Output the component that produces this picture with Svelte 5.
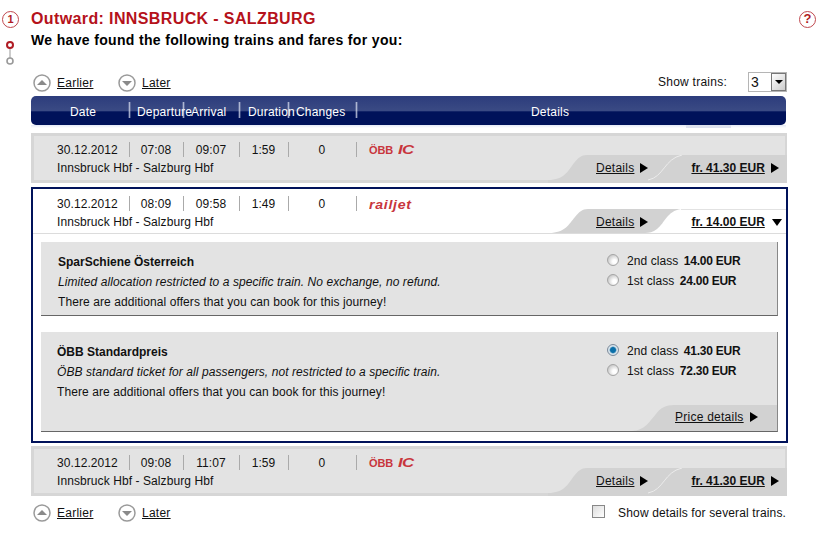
<script>
  const trains = [
    { dep: "07:08", arr: "09:07", dur: "1:59", price: "fr. 41.30 EUR", logo: "ic" },
    { dep: "08:09", arr: "09:58", dur: "1:49", price: "fr. 14.00 EUR", logo: "railjet", open: true },
    { dep: "09:08", arr: "11:07", dur: "1:59", price: "fr. 41.30 EUR", logo: "ic" }
  ];

  const fares = [
    {
      title: "SparSchiene Österreich",
      text: "Limited allocation restricted to a specific train. No exchange, no refund.",
      second: "14.00 EUR",
      first: "24.00 EUR"
    },
    {
      title: "ÖBB Standardpreis",
      text: "ÖBB standard ticket for all passengers, not restricted to a specific train.",
      second: "41.30 EUR",
      first: "72.30 EUR",
      selected: true,
      priceDetails: true
    }
  ];
</script>

{#snippet earlierLater()}
  <div class="paging">
    <svg class="round" viewBox="0 0 18 18"><circle cx="9" cy="9" r="8" /><path d="M4 11 L9 6 L14 11 Z" /></svg>
    <a href="#earlier">Earlier</a>
    <svg class="round later" viewBox="0 0 18 18"><circle cx="9" cy="9" r="8" /><path d="M4 7 L14 7 L9 12 Z" /></svg>
    <a href="#later">Later</a>
  </div>
{/snippet}

{#snippet rowCells(t)}
  <div class="cols">
    <div class="c-date">30.12.2012</div>
    <div class="c-time sep">{t.dep}</div>
    <div class="c-arr sep">{t.arr}</div>
    <div class="c-dur sep">{t.dur}</div>
    <div class="c-chg sep">0</div>
    <div class="c-logo sep">
      {#if t.logo === "ic"}
        <span class="logo obb">ÖBB</span><span class="logo ic">IC</span>
      {:else}
        <span class="logo rj">railjet</span>
      {/if}
    </div>
  </div>
  <div class="route">Innsbruck Hbf - Salzburg Hbf</div>
{/snippet}

<div class="page">
  <div class="rail">
    <div class="step">1</div>
    <svg class="progress" width="12" height="26" viewBox="0 0 12 26">
      <line x1="6" y1="8" x2="6" y2="19" stroke="#999" stroke-width="1" />
      <circle cx="6" cy="5" r="3" fill="#fff" stroke="#b01c24" stroke-width="2" />
      <circle cx="6" cy="21" r="3" fill="#fff" stroke="#999" stroke-width="1.6" />
    </svg>
  </div>

  <div class="main">
    <h1>Outward: INNSBRUCK - SALZBURG</h1>
    <h2>We have found the following trains and fares for you:</h2>

    <div class="toolbar">
      {@render earlierLater()}
      <div class="show">
        <span>Show trains:</span>
        <div class="select"><span>3</span><i class="drop"></i></div>
      </div>
    </div>

    <div class="thead">
      <div class="th-date">Date</div>
      <div class="th">Departure</div>
      <div class="th">Arrival</div>
      <div class="th th-dur">Duration</div>
      <div class="th">Changes</div>
      <div class="th th-details">Details</div>
    </div>
    <div class="under"><i></i></div>

    {#each trains as t}
      {#if t.open}
        <div class="box">
          <div class="row-open">
            {@render rowCells(t)}
            <div class="tab tab-open">
              <svg viewBox="0 0 237 25" width="237" height="25">
                <path d="M0 24 C16 24 20 15 26 8 C30 3 33 0 39 0 L132 0 C118 2 116 14 108 20 C104 23 100 24 96 24 Z" fill="#d2d2d2" />
                <line x1="132" y1="0.5" x2="237" y2="0.5" stroke="#e2e2e2" />
              </svg>
              <div class="links">
                <a href="#details">Details</a><i class="arrow"></i>
                <a class="price" href="#price">{t.price}</a><i class="arrow-down"></i>
              </div>
            </div>
          </div>

          {#each fares as f}
            <div class="fare" class:tall={f.priceDetails}>
              <div class="fare-text">
                <div class="fare-title">{f.title}</div>
                <div class="fare-desc">{f.text}</div>
                <div>There are additional offers that you can book for this journey!</div>
              </div>
              <div class="options">
                <div class="option"><i class="radio" class:on={f.selected}></i>2nd class <b>{f.second}</b></div>
                <div class="option"><i class="radio"></i>1st class <b>{f.first}</b></div>
              </div>
              {#if f.priceDetails}
                <div class="price-tab">
                  <svg viewBox="0 0 145 26" width="145" height="26">
                    <path d="M0 26 C12 26 18 16 24 9 C28 3 34 0 42 0 L145 0 L145 26 Z" fill="#d2d2d2" />
                  </svg>
                  <div class="links-price"><a href="#pd">Price details</a><i class="arrow"></i></div>
                </div>
              {/if}
            </div>
          {/each}
        </div>
      {:else}
        <div class="row">
          {@render rowCells(t)}
          <div class="tab">
            <svg viewBox="0 0 239 28" width="239" height="28">
              <path d="M0 25 C16 25 20 16 26 8 C30 3 33 0 39 0 L239 0 L239 28 L0 28 Z" fill="#d2d2d2" />
              <path d="M100 25 C116 22 116 4 134 0" fill="none" stroke="#ececec" />
            </svg>
            <div class="links">
              <a href="#details">Details</a><i class="arrow"></i>
              <a class="price" href="#price">{t.price}</a><i class="arrow"></i>
            </div>
          </div>
        </div>
      {/if}
    {/each}

    <div class="foot">
      {@render earlierLater()}
      <div class="several"><i class="check"></i>Show details for several trains.</div>
    </div>
  </div>

  <div class="help">?</div>
</div>

<style>
  :global(body) {
    background: #fff;
    color: #111;
    font-family: "Liberation Sans", Arial, sans-serif;
    font-size: 12px;
    letter-spacing: 0.08px;
  }
  a {
    color: #111;
    text-decoration: underline;
    letter-spacing: 0.25px;
  }
  i {
    display: block;
  }
  .page {
    display: flex;
    width: 818px;
    height: 536px;
    overflow: hidden;
  }
  .rail {
    width: 31px;
    flex: none;
    padding: 11px 0 0 2px;
    box-sizing: border-box;
  }
  .step,
  .help {
    width: 17px;
    height: 17px;
    box-sizing: border-box;
    border: 1.5px solid #c0484e;
    border-radius: 50%;
    color: #b01c24;
    font-size: 11px;
    font-weight: bold;
    line-height: 14px;
    text-align: center;
  }
  .help {
    margin: 11px 0 0 11px;
    flex: none;
    font-size: 13px;
  }
  .progress {
    display: block;
    margin: 12px 0 0 2px;
  }
  .main {
    width: 757px;
    flex: none;
  }
  h1 {
    margin: 9px 0 0;
    color: #b5121b;
    font-size: 16px;
    line-height: 20px;
    letter-spacing: 0.38px;
  }
  h2 {
    margin: 2px 0 0;
    color: #000;
    font-size: 14px;
    line-height: 18px;
    letter-spacing: 0.34px;
  }
  .toolbar {
    display: flex;
    justify-content: space-between;
    align-items: center;
    height: 20px;
    margin-top: 23px;
    padding-right: 1px;
  }
  .paging {
    display: flex;
    align-items: center;
    padding: 2px 0 0 2px;
  }
  .paging a {
    margin-left: 6px;
    width: 36px;
  }
  .round {
    width: 18px;
    height: 18px;
    flex: none;
  }
  .round.later {
    margin-left: 25px;
  }
  .round circle {
    fill: #fff;
    stroke: #9a9a9a;
    stroke-width: 1.5;
  }
  .round path {
    fill: #8a8a8a;
  }
  .show {
    display: flex;
    align-items: center;
    gap: 21px;
    letter-spacing: 0.25px;
  }
  .select {
    display: flex;
    align-items: center;
    justify-content: space-between;
    width: 39px;
    height: 20px;
    box-sizing: border-box;
    border: 1px solid #b5b5b5;
    padding: 0 0 0 2px;
    font-size: 14px;
  }
  .drop {
    width: 15px;
    height: 18px;
    box-sizing: border-box;
    border: 1px solid #777;
    background: linear-gradient(135deg, #fff, #ccc);
    position: relative;
  }
  .drop::after {
    content: "";
    position: absolute;
    left: 3px;
    top: 6px;
    border: 4px solid transparent;
    border-top: 4px solid #000;
    border-bottom: 0;
  }
  .thead {
    display: grid;
    grid-template-columns: 98px 54px 56px 49px 68px 1fr;
    width: 755px;
    height: 29px;
    margin-top: 4px;
    border-radius: 5px;
    background: linear-gradient(#2c3c7c 0, #3a4a84 50%, #00125a 55%, #00125a 100%);
    color: #fff;
    line-height: 32px;
    white-space: nowrap;
    letter-spacing: 0.2px;
  }
  .th-date {
    text-align: center;
    padding-left: 6px;
  }
  .th {
    padding-left: 8px;
    position: relative;
  }
  .th::before {
    content: "";
    position: absolute;
    left: -1px;
    top: 6px;
    width: 3px;
    height: 16px;
    background: linear-gradient(90deg, transparent, rgba(225, 230, 245, 0.7), transparent);
  }
  .th-dur {
    padding-left: 9px;
  }
  .th-details {
    padding-left: 175px;
  }
  .under {
    display: flex;
    justify-content: flex-end;
    width: 755px;
    height: 3px;
    background: linear-gradient(#e3e8f6, #fff);
    margin-bottom: 5px;
  }
  .under i {
    width: 45px;
    margin-right: 55px;
    background: #dde1ee;
  }
  .row {
    position: relative;
    width: 756px;
    height: 50px;
    box-sizing: border-box;
    padding-top: 5px;
    border: 3px solid #d6d6d6;
    border-right-width: 2px;
    background: #e3e3e3;
  }
  .box + .row {
    margin-top: 3px;
  }
  .cols {
    display: grid;
    grid-template-columns: 95px 54px 56px 49px 68px 1fr;
    height: 18px;
    line-height: 18px;
  }
  .c-date {
    padding-left: 23px;
  }
  .c-time,
  .c-arr,
  .c-dur,
  .c-chg {
    text-align: center;
  }
  .sep {
    position: relative;
  }
  .sep::before {
    content: "";
    position: absolute;
    left: 0;
    top: 1px;
    width: 1px;
    height: 15px;
    background: #aaa;
  }
  .route {
    padding-left: 23px;
    line-height: 18px;
  }
  .c-logo {
    padding-left: 13px;
    display: flex;
    align-items: center;
  }
  .logo {
    color: #c8353c;
    font-weight: bold;
    font-size: 11px;
  }
  .obb {
    letter-spacing: -0.1px;
  }
  .ic {
    font-style: italic;
    font-size: 12px;
    margin-left: 5px;
    letter-spacing: -0.5px;
    transform: scaleX(1.4);
    transform-origin: left;
  }
  .rj {
    font-style: italic;
    font-size: 12px;
    letter-spacing: 0.6px;
    transform: scaleX(1.18);
    transform-origin: left;
    padding-top: 1px;
  }
  .tab {
    position: absolute;
    right: -2px;
    bottom: -3px;
    width: 239px;
    height: 28px;
  }
  .tab svg,
  .price-tab svg {
    position: absolute;
    left: 0;
    top: 0;
  }
  .links {
    position: relative;
    display: flex;
    align-items: center;
    height: 18px;
    padding: 4px 0 0 48px;
  }
  .price {
    font-weight: bold;
    margin-left: 43px;
    letter-spacing: 0;
  }
  .arrow {
    margin-left: 6px;
    border-left: 8px solid #000;
    border-top: 5px solid transparent;
    border-bottom: 5px solid transparent;
  }
  .arrow-down {
    margin-left: 7px;
    border-top: 7px solid #000;
    border-left: 5px solid transparent;
    border-right: 5px solid transparent;
  }
  .box {
    width: 757px;
    height: 256px;
    margin-top: 4px;
    box-sizing: border-box;
    border: 2px solid #00125a;
    background: #fff;
  }
  .row-open {
    position: relative;
    height: 45px;
    box-sizing: border-box;
    padding-top: 6px;
    border-bottom: 1px solid #dcdcdc;
  }
  .row-open .cols,
  .row-open .route {
    margin-left: 1px;
  }
  .tab-open {
    right: 0;
    bottom: -1px;
    width: 237px;
    height: 25px;
  }
  .tab-open .links {
    padding: 4px 0 0 47px;
  }
  .fare {
    position: relative;
    display: flex;
    width: 737px;
    height: 74px;
    box-sizing: border-box;
    margin: 8px 0 0 8px;
    padding: 10px 0 0 17px;
    background: #e3e3e3;
    border-right: 1px solid #888;
    border-bottom: 1px solid #666;
    line-height: 20px;
  }
  .fare + .fare {
    margin-top: 16px;
    padding-left: 16px;
  }
  .fare.tall {
    height: 100px;
  }
  .fare-text {
    width: 549px;
    flex: none;
  }
  .tall .fare-text {
    width: 550px;
  }
  .fare-title {
    font-weight: bold;
    letter-spacing: 0;
  }
  .fare-desc {
    font-style: italic;
  }
  .options {
    line-height: 20px;
    margin-top: -1px;
  }
  .option {
    display: flex;
    align-items: center;
    gap: 2px;
    white-space: pre;
  }
  .option b {
    letter-spacing: -0.25px;
  }
  .radio {
    width: 12px;
    height: 12px;
    box-sizing: border-box;
    margin: -3px 6px 0 0;
    border: 1px solid #a5a5a5;
    border-radius: 50%;
    background: radial-gradient(circle at 65% 65%, #fff 20%, #bbb 90%);
  }
  .radio.on {
    border-color: #7c8a9a;
    background: radial-gradient(circle, #0b6fa8 35%, #d8e4ec 55%);
  }
  .price-tab {
    position: absolute;
    right: 0;
    bottom: 0;
    width: 145px;
    height: 26px;
  }
  .links-price {
    position: relative;
    display: flex;
    align-items: center;
    height: 24px;
    padding-left: 43px;
  }
  .foot {
    display: flex;
    justify-content: space-between;
    align-items: center;
    height: 20px;
    margin-top: 7px;
    width: 755px;
  }
  .foot .paging {
    padding-top: 0;
  }
  .several {
    display: flex;
    align-items: center;
    letter-spacing: 0.14px;
  }
  .check {
    width: 13px;
    height: 13px;
    box-sizing: border-box;
    margin: -3px 13px 0 0;
    border: 1px solid #888;
    background: linear-gradient(135deg, #ddd, #fff);
  }
</style>
